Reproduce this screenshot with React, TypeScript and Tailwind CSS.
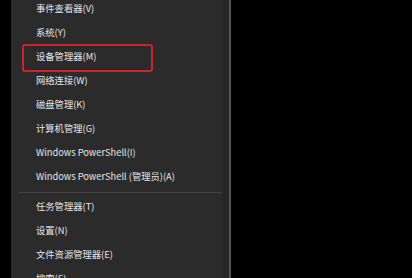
import React from "react";

const font = { fontFamily: '"Noto Sans CJK SC", "Noto Sans", sans-serif' };

function Item({ label, boxed }: { label: string; boxed?: boolean }) {
  return (
    <div className="relative shrink-0 h-[24px] flex items-center pl-[25px] text-[9.3px] text-[#e6e6e6] leading-none whitespace-nowrap">
      {boxed && (
        <div className="absolute left-[11px] top-[-1px] w-[131px] h-[28px] border-2 border-[#d0222a] rounded-[3px]" />
      )}
      <span>{label}</span>
    </div>
  );
}

export default function App() {
  const top = [
    "事件查看器(V)",
    "系统(Y)",
    "设备管理器(M)",
    "网络连接(W)",
    "磁盘管理(K)",
    "计算机管理(G)",
    "Windows PowerShell(I)",
    "Windows PowerShell (管理员)(A)",
  ];
  const bottom = ["任务管理器(T)", "设置(N)", "文件资源管理器(E)", "搜索(S)"];
  return (
    <div className="w-[412px] h-[278px] bg-black overflow-hidden flex" style={font}>
      <div className="w-[11px] shrink-0 bg-black" />
      <div className="w-[218px] shrink-0 bg-[#2b2b2b] flex">
        <div className="flex-1 flex flex-col -mt-[3px]">
          {top.map((t) => (
            <Item key={t} label={t} boxed={t === "设备管理器(M)"} />
          ))}
          <div className="shrink-0 h-[6px] flex items-center pl-[7px]">
            <div className="h-px w-full bg-[#444444]" />
          </div>
          {bottom.map((t) => (
            <Item key={t} label={t} />
          ))}
        </div>
        <div className="w-[7px] shrink-0 bg-[#262626]" />
      </div>
      <div className="w-[2px] shrink-0 bg-[#555555]" />
      <div className="flex-1 bg-black" />
    </div>
  );
}
